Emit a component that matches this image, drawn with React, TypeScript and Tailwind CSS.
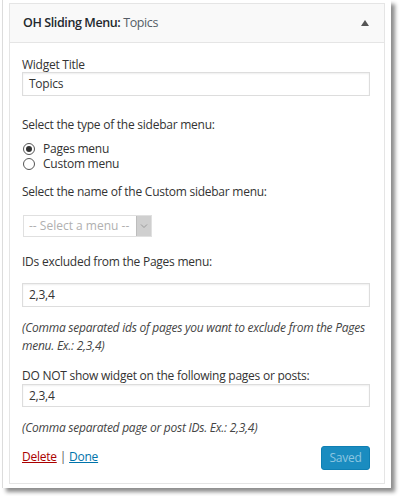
import React from "react";

const font = { fontFamily: '"Open Sans", "Noto Sans", sans-serif' };

function Radio({ checked, label }: { checked: boolean; label: string }) {
  return (
    <div className="flex items-center h-[15px] gap-[8px]">
      <span className="w-[12px] h-[12px] rounded-full border border-[#555] bg-white flex items-center justify-center">
        {checked && <span className="w-[6px] h-[6px] rounded-full bg-[#333]" />}
      </span>
      <span className="text-[12px] leading-[15px] text-[#333]">{label}</span>
    </div>
  );
}

function TextInput({ value, h = 24 }: { value: string; h?: number }) {
  return (
    <div
      className="w-[348px] border border-[#dddddd] bg-white flex items-center pl-[6px] text-[12px] text-[#333] shadow-[inset_0_1px_2px_rgba(0,0,0,0.07)]"
      style={{ height: h }}
    >
      {value}
    </div>
  );
}

export default function App() {
  return (
    <div className="w-[400px] h-[496px] bg-white" style={font}>
      <div className="ml-[2px] w-[389px] h-[488px] border-l border-[#dcdcdc] bg-white pl-[6px] pr-[6px] pt-[3px] shadow-[4px_4px_4px_rgba(0,0,0,0.45)]">
        <div className="w-[376px] h-[481px] border border-[#e5e5e5] bg-white flex flex-col">
          <div className="h-[39px] bg-[#f9f9f9] border-b border-[#e5e5e5] flex items-center justify-between pl-[13px] pr-[15px]">
            <div className="text-[12.5px] tracking-[-0.4px] text-[#23282d]">
              <span className="font-semibold">OH Sliding Menu:</span>{" "}
              <span className="text-[#555d66]">Topics</span>
            </div>
            <svg width="8" height="6" viewBox="0 0 8 6">
              <path d="M0 6 L4 0 L8 6 Z" fill="#555" />
            </svg>
          </div>
          <div className="flex flex-col pl-[12px] pt-[14px] text-[12px] tracking-[-0.25px] text-[#333]">
            <div className="h-[15px] leading-[15px]">Widget Title</div>
            <TextInput value="Topics" />
            <div className="mt-[21px] h-[16px] leading-[16px]">Select the type of the sidebar menu:</div>
            <div className="mt-[8px] flex flex-col pl-[1px]">
              <Radio checked label="Pages menu" />
              <Radio checked={false} label="Custom menu" />
            </div>
            <div className="mt-[13px] h-[16px] leading-[16px]">Select the name of the Custom sidebar menu:</div>
            <div className="mt-[15px] ml-[1px] w-[129px] h-[22px] border border-[#e0e0e0] bg-white flex">
              <div className="flex-1 flex items-center pl-[5px] text-[12px] tracking-normal text-[#b0b0b0]">-- Select a menu --</div>
              <div className="w-[15px] h-full bg-[#cfcfcf] border-l border-[#bdbdbd] flex items-center justify-center">
                <svg width="8" height="6" viewBox="0 0 8 6">
                  <path d="M1 1.5 L4 4.5 L7 1.5" stroke="#9a9a9a" strokeWidth="1" fill="none" />
                </svg>
              </div>
            </div>
            <div className="mt-[17px] h-[16px] leading-[16px]">IDs excluded from the Pages menu:</div>
            <div className="mt-[13px]">
              <TextInput value="2,3,4" />
            </div>
            <div className="mt-[12px] w-[352px] italic text-[#444] leading-[18px]">
              (Comma separated ids of pages you want to exclude from the Pages menu. Ex.: 2,3,4)
            </div>
            <div className="mt-[13px] h-[16px] leading-[16px]">DO NOT show widget on the following pages or posts:</div>
            <TextInput value="2,3,4" h={23} />
            <div className="mt-[12px] italic text-[#444] leading-[18px]">
              (Comma separated page or post IDs. Ex.: 2,3,4)
            </div>
            <div className="mt-[9px] flex items-center justify-between w-[348px]">
              <div className="text-[12px] text-[#555] mt-[-2px]">
                <a className="text-[#a00] underline" href="#">Delete</a>
                <span className="mx-[3px]">|</span>
                <a className="text-[#0073aa] underline" href="#">Done</a>
              </div>
              <div className="w-[49px] h-[24px] rounded-[3px] bg-[#1a8cc0] border border-[#0f7fb3] flex items-center justify-center text-[12px] text-[#8cc6e0]">
                Saved
              </div>
            </div>
          </div>
        </div>
      </div>
    </div>
  );
}
